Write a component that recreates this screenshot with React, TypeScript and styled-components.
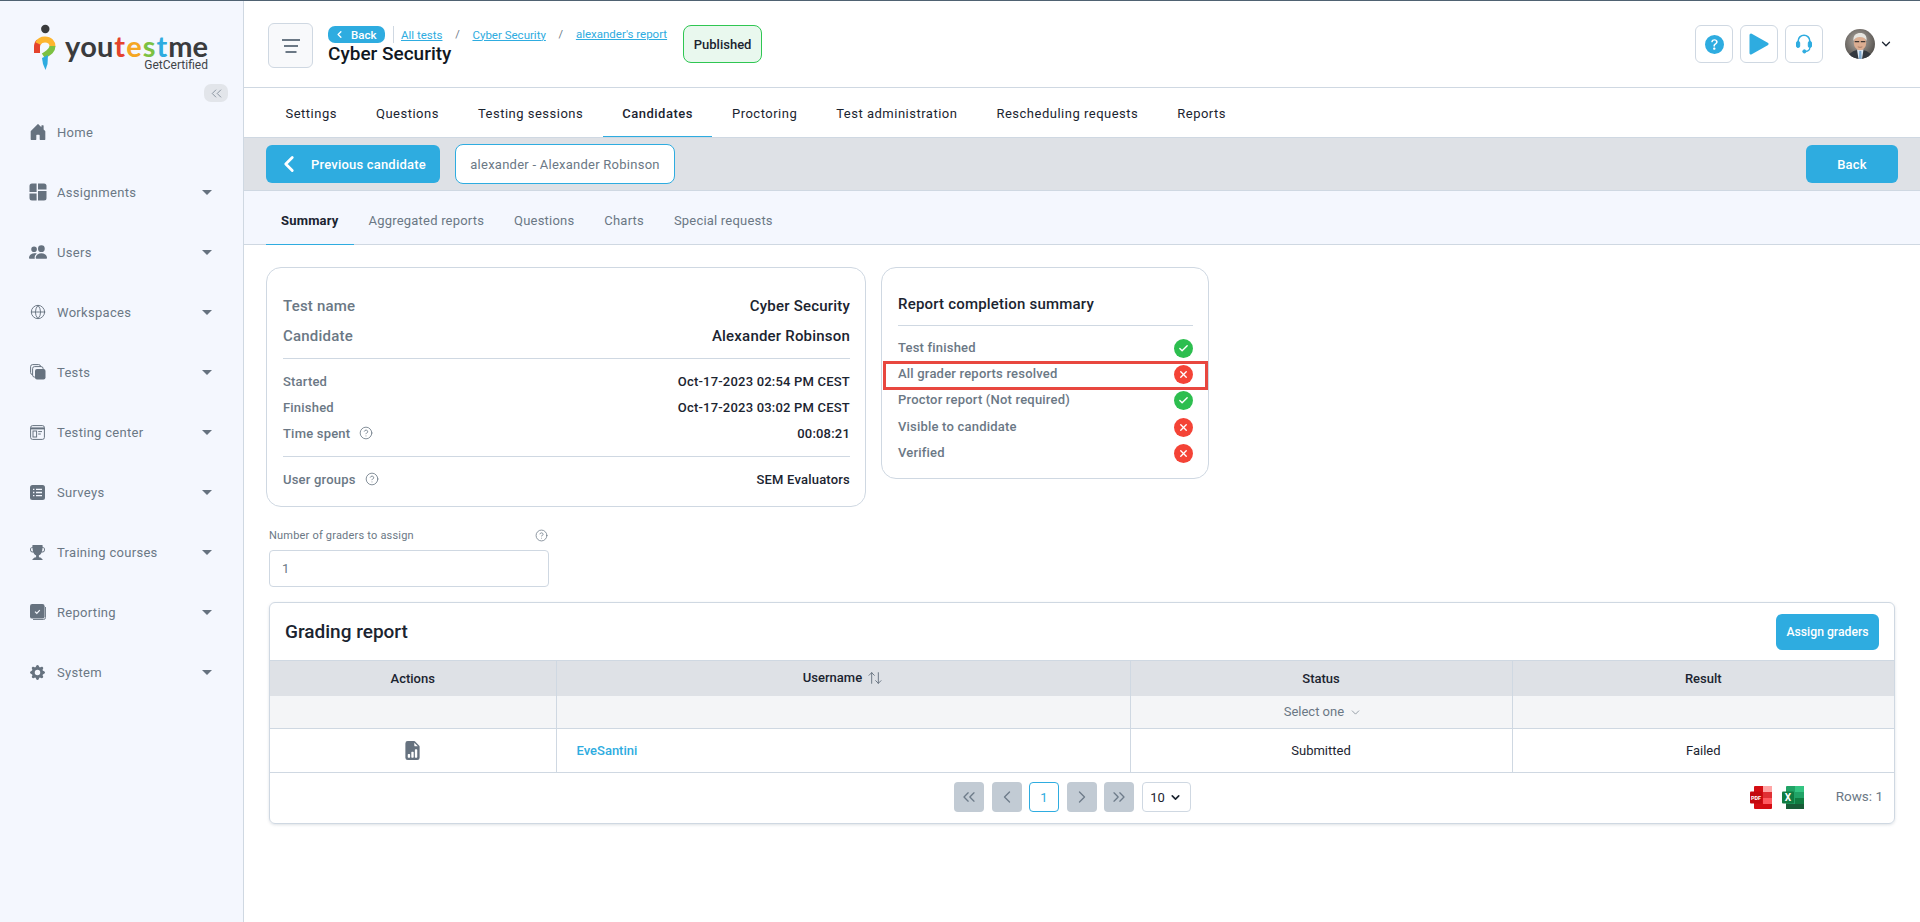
import React from 'react';
import styled, {createGlobalStyle} from 'styled-components';
import {
    ArrowUpDown,
    Check,
    ChevronDown,
    ChevronLeft,
    ChevronRight,
    ChevronsLeft,
    ChevronsRight,
    CircleHelp,
    Globe,
    X,
} from 'lucide-react';
import {
    BsFileEarmarkBarGraphFill,
    BsGearFill,
    BsHouseDoorFill,
    BsPeopleFill,
    BsQuestionCircleFill,
    BsTrophyFill,
} from 'react-icons/bs';

const blue = '#2eace0';
const line = '#cfd8e2';
const grayText = '#6b7885';
const darkText = '#1b2430';

const GlobalStyle = createGlobalStyle`
    html, body {
        margin: 0;
        height: 100%;
        background: #fff;
        overflow: hidden;
    }
    body, input {
        font-family: Roboto, "Liberation Sans", sans-serif;
    }
    * {
        box-sizing: border-box;
    }
`;

const Page = styled.div`
    display: flex;
    height: 922px;
    border-top: 1px solid #4f6272;
`;

/* sidebar */
const Sidebar = styled.aside`
    display: flex;
    flex-direction: column;
    flex: 0 0 244px;
    background: #f4f7fe;
    border-right: 1px solid ${line};
`;

const Brand = styled.div`
    display: flex;
    height: 75px;
    padding: 19px 0 0 28px;
`;

const BrandText = styled.div`
    display: flex;
    flex-direction: column;
    align-items: flex-end;
    margin: 13px 0 0 1px;
`;

const Wordmark = styled.div`
    display: flex;
    gap: 1px;
    font-family: Lato, sans-serif;
    font-weight: 700;
    font-size: 29px;
    line-height: 26px;
    font-kerning: none;
`;

const Letter = styled.span<{$color: string}>`
    display: block;
    height: 26px;
    color: ${p => p.$color};
`;

const Tagline = styled.div`
    font-size: 12px;
    line-height: 12px;
    color: #3f4448;
`;

const Collapse = styled.button`
    display: flex;
    align-items: center;
    justify-content: center;
    align-self: flex-end;
    width: 24px;
    height: 18px;
    margin: 8px 15px 0 0;
    padding: 0;
    border: 0;
    border-radius: 7px;
    background: #e2e5ea;
    color: #7b8794;
`;

const MenuItem = styled.div`
    display: flex;
    align-items: center;
    height: 60px;
    padding: 0 31px 0 24px;
    color: ${grayText};
    font-size: 13px;
    letter-spacing: 0.3px;
`;

const MenuIcon = styled.span`
    display: flex;
    align-items: center;
    justify-content: center;
    width: 27px;
    margin-right: 6px;
    color: #66727f;
`;

const Caret = styled.span`
    margin-left: auto;
    border-left: 5px solid transparent;
    border-right: 5px solid transparent;
    border-top: 5.5px solid #66727f;
`;

/* top of the main column */
const Main = styled.main`
    display: flex;
    flex-direction: column;
    flex: 1;
    min-width: 0;
`;

const Header = styled.header`
    display: flex;
    align-items: flex-start;
    height: 87px;
    padding: 22px 27px 0 24px;
    border-bottom: 1px solid ${line};
`;

const Hamburger = styled.button`
    display: flex;
    align-items: center;
    justify-content: center;
    width: 45px;
    height: 45px;
    padding: 0;
    background: #f8f9fb;
    border: 1px solid ${line};
    border-radius: 6px;
    color: #6b7885;
`;

const TitleBlock = styled.div`
    margin: 3px 0 0 15px;
`;

const Crumbs = styled.div`
    display: flex;
    align-items: center;
    height: 17px;
    font-size: 11.5px;
`;

const BackPill = styled.span`
    display: flex;
    align-items: center;
    gap: 6px;
    width: 57px;
    height: 17px;
    padding-left: 6px;
    border-radius: 7px;
    background: ${blue};
    color: #fff;
    font-weight: 500;
    font-size: 11.5px;
`;

const CrumbBar = styled.span`
    width: 1px;
    height: 17px;
    margin: 0 7px 0 8px;
    background: ${line};
`;

const Crumb = styled.a<{$raise?: boolean}>`
    color: ${blue};
    text-decoration: underline;
    transform: translateY(${p => (p.$raise ? '-1px' : '0')});
`;

const CrumbSlash = styled.span`
    width: 30px;
    text-align: center;
    color: #6b7885;
    font-size: 11px;
`;

const PageTitle = styled.div`
    font-size: 19px;
    font-weight: 500;
    line-height: 22px;
    color: #11181f;
`;

const Published = styled.span`
    display: flex;
    align-items: center;
    justify-content: center;
    width: 79px;
    height: 38px;
    margin: 2px 0 0 16px;
    background: #e9f8ee;
    border: 1px solid #2fc652;
    border-radius: 8px;
    color: ${darkText};
    font-size: 13px;
    font-weight: 500;
`;

const HeaderRight = styled.div`
    display: flex;
    align-items: center;
    margin: 2px 0 0 auto;
`;

const ToolButton = styled.button`
    display: flex;
    align-items: center;
    justify-content: center;
    width: 38px;
    height: 38px;
    margin-right: 7px;
    padding: 0;
    background: #fff;
    border: 1px solid ${line};
    border-radius: 6px;
    color: ${blue};
`;

const AvatarWrap = styled.span`
    display: flex;
    align-items: center;
    gap: 4px;
    margin-left: 15px;
    color: #1b2430;
`;

const TopTabs = styled.nav`
    display: flex;
    flex: 0 0 49px;
    padding-left: 22px;
`;

const TopTab = styled.a<{$active?: boolean}>`
    display: flex;
    align-items: center;
    padding: 3px 19.5px 0;
    font-size: 13px;
    letter-spacing: 0.5px;
    color: ${darkText};
    font-weight: ${p => (p.$active ? 500 : 400)};
    border-bottom: 1px solid ${p => (p.$active ? blue : 'transparent')};
`;

const CandidateBar = styled.div`
    display: flex;
    align-items: center;
    flex: 0 0 54px;
    padding: 0 22px;
    background: #dee1e6;
    border-top: 1px solid ${line};
    border-bottom: 1px solid ${line};
`;

const PrimaryButton = styled.button<{$width: number}>`
    display: flex;
    align-items: center;
    justify-content: center;
    width: ${p => p.$width}px;
    height: 38px;
    padding: 0;
    border: 0;
    border-radius: 6px;
    background: ${blue};
    color: #fff;
    font-family: inherit;
    font-size: 13px;
    font-weight: 500;
    letter-spacing: 0.2px;
`;

const PreviousButton = styled(PrimaryButton)`
    justify-content: flex-start;
    gap: 9px;
    padding-left: 10px;
`;

const NameBox = styled.div`
    display: flex;
    align-items: center;
    justify-content: center;
    width: 220px;
    height: 40px;
    margin-left: 15px;
    background: #fff;
    border: 1px solid ${blue};
    border-radius: 8px;
    color: ${grayText};
    font-size: 13px;
    letter-spacing: 0.25px;
`;

const BarEnd = styled.div`
    margin-left: auto;
`;

const SubTabs = styled.nav`
    display: flex;
    flex: 0 0 54px;
    padding-left: 22px;
    background: #f4f7fe;
    border-bottom: 1px solid ${line};
`;

const SubTab = styled.a<{$active?: boolean}>`
    display: flex;
    align-items: center;
    padding: 6px 15px 0;
    margin-bottom: -1px;
    font-size: 13px;
    letter-spacing: 0.2px;
    color: ${p => (p.$active ? darkText : grayText)};
    font-weight: ${p => (p.$active ? 700 : 400)};
    border-bottom: 1px solid ${p => (p.$active ? blue : 'transparent')};
`;

/* summary cards */
const Content = styled.div`
    display: flex;
    flex-direction: column;
    padding: 22px 25px 0 22px;
`;

const Cards = styled.div`
    display: flex;
    align-items: flex-start;
    gap: 15px;
`;

const InfoCard = styled.section`
    width: 600px;
    height: 240px;
    padding: 23px 15px 0 16px;
    border: 1px solid ${line};
    border-radius: 15px;
`;

const InfoRow = styled.div<{$big?: boolean}>`
    display: flex;
    align-items: center;
    justify-content: space-between;
    height: ${p => (p.$big ? 30 : 26)}px;
    font-size: ${p => (p.$big ? 15 : 13)}px;
    letter-spacing: 0.2px;
    font-weight: 500;
    color: ${darkText};
`;

const InfoLabel = styled.span`
    display: flex;
    align-items: center;
    gap: 9px;
    color: ${grayText};
`;

const Divider = styled.div<{$above: number; $below: number}>`
    height: 1px;
    margin: ${p => p.$above}px 0 ${p => p.$below}px;
    background: ${line};
`;

const StatusCard = styled.section`
    width: 328px;
    height: 212px;
    padding: 26px 15px 0 16px;
    border: 1px solid ${line};
    border-radius: 15px;
`;

const StatusTitle = styled.h3`
    margin: 0;
    font-size: 15px;
    font-weight: 500;
    line-height: 20px;
    letter-spacing: 0.2px;
    color: ${darkText};
`;

const StatusRow = styled.div`
    position: relative;
    display: flex;
    align-items: center;
    justify-content: space-between;
    height: 26.4px;
    color: ${grayText};
    font-size: 13px;
    font-weight: 500;
    letter-spacing: 0.2px;
`;

const StatusDot = styled.span<{$ok: boolean}>`
    display: flex;
    align-items: center;
    justify-content: center;
    width: 19px;
    height: 19px;
    margin-top: 2px;
    border-radius: 50%;
    background: ${p => (p.$ok ? '#2dbe4f' : '#f44336')};
    color: #fff;
`;

const Highlight = styled.span`
    position: absolute;
    top: 1px;
    bottom: -3px;
    left: -15px;
    right: -15px;
    border: 3px solid #e8473f;
`;

/* graders field */
const Field = styled.div`
    width: 280px;
    margin: 21px 0 0 3px;
`;

const FieldLabel = styled.label`
    display: flex;
    align-items: center;
    justify-content: space-between;
    height: 14px;
    margin-bottom: 8px;
    padding-right: 1px;
    font-size: 11px;
    letter-spacing: 0.2px;
    color: ${grayText};
`;

const FieldInput = styled.input`
    display: block;
    width: 100%;
    height: 37px;
    padding: 0 12px;
    border: 1px solid ${line};
    border-radius: 4px;
    font-size: 13px;
    color: ${grayText};
`;

/* grading table */
const GradingCard = styled.section`
    margin: 15px 0 0 3px;
    height: 222px;
    border: 1px solid ${line};
    border-radius: 6px;
    box-shadow: 0 1px 3px rgba(90, 110, 130, 0.2);
`;

const GradingHead = styled.div`
    display: flex;
    align-items: center;
    justify-content: space-between;
    height: 57px;
    padding: 0 15px;
`;

const GradingTitle = styled.h2`
    margin: 0;
    font-size: 19px;
    font-weight: 500;
    color: ${darkText};
`;

const AssignButton = styled(PrimaryButton)`
    height: 36px;
    font-size: 12.2px;
    letter-spacing: 0;
`;

const Table = styled.table`
    width: 100%;
    table-layout: fixed;
    border-collapse: collapse;
    font-size: 13px;
    color: ${darkText};
`;

const Th = styled.th`
    height: 35px;
    padding: 0;
    background: #dee1e6;
    border: 1px solid ${line};
    border-width: 1px 0 0 1px;
    font-weight: 500;
    &:first-child {
        border-left: 0;
    }
`;

const SortGlyph = styled.span`
    display: inline-flex;
    vertical-align: -4px;
    margin-left: 5px;
    color: #66727f;
`;

const FilterGlyph = styled(SortGlyph)`
    margin-left: 2px;
    vertical-align: -3px;
`;

const FilterCell = styled.td`
    height: 33px;
    padding: 0 0 0 4px;
    text-align: center;
    background: #f4f5f7;
    border-left: 1px solid ${line};
    border-bottom: 1px solid ${line};
    color: ${grayText};
    &:first-child {
        border-left: 0;
    }
`;

const Td = styled.td`
    height: 44px;
    padding: 0;
    text-align: center;
    border-left: 1px solid ${line};
    border-bottom: 1px solid ${line};
    &:first-child {
        border-left: 0;
    }
`;

const UserCell = styled(Td)`
    padding-left: 20px;
    text-align: left;
`;

const UserLink = styled.a`
    color: ${blue};
    font-weight: 500;
`;

const ActionIcon = styled.span`
    display: inline-flex;
    color: #66727f;
    vertical-align: middle;
`;

const Footer = styled.div`
    display: flex;
    align-items: center;
    height: 50px;
    padding: 0 11px 2px 684px;
`;

const Pager = styled.div`
    display: flex;
    align-items: center;
    gap: 7.5px;
`;

const PageButton = styled.button`
    display: flex;
    align-items: center;
    justify-content: center;
    width: 30px;
    height: 30px;
    padding: 0;
    border: 0;
    border-radius: 4px;
    background: #c2cbd4;
    color: #6e7c8a;
`;

const PageCurrent = styled(PageButton)`
    background: #fff;
    border: 1px solid ${blue};
    color: ${blue};
    font-family: inherit;
    font-size: 13px;
`;

const PageSize = styled.div`
    display: flex;
    align-items: center;
    justify-content: center;
    gap: 4px;
    width: 49px;
    height: 30px;
    border: 1px solid ${line};
    border-radius: 4px;
    font-size: 13px;
    color: ${darkText};
`;

const Exports = styled.div`
    display: flex;
    align-items: center;
    gap: 10px;
    margin-left: auto;
`;

const RowsCount = styled.span`
    margin: 0 0 3px 22px;
    font-size: 13.5px;
    color: ${grayText};
`;

/* drawings */
function LogoMark() {
    return (
        <svg width="36" height="56" viewBox="0 0 36 56">
            <circle cx="17.3" cy="9" r="4.2" fill="#3a3b3d"/>
            <path d="M9 33 V27 Q9 23.5 11 22" fill="none" stroke="#e4432d" strokeWidth="6"/>
            <path d="M10 23.5 Q12 19.5 17 19.5 C22 19.5 24.5 23 24.5 26.5" fill="none" stroke="#fdb52e" strokeWidth="6"/>
            <path d="M24.5 26 C24.5 31 20 33 15.5 36" fill="none" stroke="#7cc142" strokeWidth="6"/>
            <path d="M14 38 L20 35 L19.5 44 L17.5 50 L15 44 Z" fill="#2eace0"/>
        </svg>
    );
}

function BoardIcon() {
    return (
        <svg width="18" height="18" viewBox="0 0 18 18" fill="currentColor">
            <path d="M3 0.5h4.6v8.5H0.5V3A2.5 2.5 0 0 1 3 0.5Z"/>
            <path d="M9 0.5h6a2.5 2.5 0 0 1 2.5 2.5v3.6H9Z"/>
            <path d="M0.5 10.5h7.1v7H3A2.5 2.5 0 0 1 0.5 15Z"/>
            <path d="M9 8h8.5v7a2.5 2.5 0 0 1-2.5 2.5H9Z"/>
        </svg>
    );
}

function StackIcon() {
    return (
        <svg width="16" height="16" viewBox="0 0 16 16">
            <rect x="0.6" y="0.6" width="10" height="10" rx="2" fill="none" stroke="currentColor"/>
            <rect x="2.6" y="2.6" width="10.5" height="10.5" rx="2" fill="#f4f7fe" stroke="currentColor"/>
            <rect x="5" y="5" width="10.5" height="10.5" rx="2" fill="currentColor"/>
        </svg>
    );
}

function CenterIcon() {
    return (
        <svg width="15" height="15" viewBox="0 0 15 15" fill="none" stroke="currentColor">
            <rect x="0.6" y="0.6" width="13.8" height="13.8" rx="2"/>
            <path d="M0.6 3.4h13.8" strokeWidth="2"/>
            <rect x="3" y="6" width="3.6" height="6"/>
            <path d="M8.2 6.6h3.8M8.2 9h2.6"/>
        </svg>
    );
}

function SurveyIcon() {
    return (
        <svg width="15" height="15" viewBox="0 0 15 15">
            <rect width="15" height="15" rx="2.5" fill="currentColor"/>
            <path d="M3 4.3h1.4M6 4.3h6M3 7.5h1.4M6 7.5h6M3 10.7h1.4M6 10.7h6" stroke="#f4f7fe" strokeWidth="1.3"/>
        </svg>
    );
}

function ReportIcon() {
    return (
        <svg width="16" height="16" viewBox="0 0 16 16">
            <rect width="14.6" height="14.6" rx="2.2" fill="currentColor"/>
            <path d="M15.5 3v10.5a2 2 0 0 1-2 2H3" fill="none" stroke="currentColor" strokeWidth="0.9"/>
            <path d="M5 7.6l1.8 1.7 3-3.2" fill="none" stroke="#f4f7fe" strokeWidth="1.2"/>
        </svg>
    );
}

function MenuGlyph() {
    return (
        <svg width="20" height="16" viewBox="0 0 20 16" fill="none" stroke="currentColor" strokeWidth="1.8">
            <path d="M1 2h18M3 8h14M4.500 14h11"/>
        </svg>
    );
}

function PlayGlyph() {
    return (
        <svg width="20" height="22" viewBox="0 0 20 22">
            <path d="M2 2 L18 11 L2 20 Z" fill="currentColor" stroke="currentColor" strokeWidth="3" strokeLinejoin="round"/>
        </svg>
    );
}

function HeadsetGlyph() {
    return (
        <svg width="16" height="20" viewBox="0 0 16 20" fill="none" stroke="currentColor">
            <path d="M2.200 8V7a5.800 5.800 0 0 1 11.600 0v1" strokeWidth="1.600"/>
            <rect x="0.500" y="7.500" width="3.200" height="6" rx="1.400" fill="currentColor"/>
            <rect x="12.300" y="7.500" width="3.200" height="6" rx="1.400" fill="currentColor"/>
            <path d="M13.800 13.500c0 2.500-1.600 3.800-4.300 3.800" strokeWidth="1.300"/>
            <circle cx="8.400" cy="17.400" r="1.600" fill="currentColor"/>
        </svg>
    );
}

function Avatar() {
    return (
        <svg width="30" height="30" viewBox="0 0 30 30">
            <defs>
                <clipPath id="avatarClip">
                    <circle cx="15" cy="15" r="15"/>
                </clipPath>
                <radialGradient id="avatarBg" cx="0.45" cy="0.4" r="0.7">
                    <stop offset="0" stopColor="#b5afa8"/>
                    <stop offset="1" stopColor="#45423f"/>
                </radialGradient>
            </defs>
            <g clipPath="url(#avatarClip)">
                <rect width="30" height="30" fill="url(#avatarBg)"/>
                <path d="M3 30c0-6 5-8.500 12-9.500 7 1 12 3.500 12 9.500Z" fill="#33383f"/>
                <path d="M12 20.500h6.500l-1.500 9.500h-3.500Z" fill="#dfe8f1"/>
                <path d="M14.300 22h2l.400 8h-2.800Z" fill="#7fa9cf"/>
                <ellipse cx="15" cy="13.800" rx="6.200" ry="7.400" fill="#dcae92"/>
                <path d="M8.500 12c-.7-6 3-8 6.600-8 4.200 0 7.200 2.600 6.400 8-1-2.800-3-4-6.600-4-3.200 0-5.400 1.200-6.400 4Z" fill="#e6e4df"/>
                <path d="M9.700 12.600h4.500M15.800 12.600h4.500" stroke="#3f3632" strokeWidth="1.100"/>
                <path d="M12.800 17.800c1.500.7 3 .7 4.500 0" stroke="#9c6d58" strokeWidth="0.800" fill="none"/>
            </g>
        </svg>
    );
}

function PdfIcon() {
    return (
        <svg width="22" height="23" viewBox="0 0 22 23">
            <rect x="4" y="0" width="18" height="23" rx="1" fill="#d40d12"/>
            <rect x="13" y="0" width="9" height="6" fill="#ffa5a5"/>
            <rect x="13" y="6" width="9" height="6" fill="#e03034"/>
            <rect x="13" y="12" width="9" height="6" fill="#ff5a5f"/>
            <rect x="0" y="5.500" width="12" height="12" rx="1" fill="#c30a0f"/>
            <text x="6" y="13.800" textAnchor="middle" fontSize="5.500" fontWeight="700" fill="#fff">PDF</text>
        </svg>
    );
}

function XlsIcon() {
    return (
        <svg width="22" height="23" viewBox="0 0 22 23">
            <rect x="4" y="0" width="18" height="23" rx="1" fill="#21a366"/>
            <rect x="13" y="0" width="9" height="6" fill="#33c481"/>
            <rect x="13" y="12" width="9" height="6" fill="#107c41"/>
            <rect x="4" y="18" width="18" height="5" fill="#185c37"/>
            <rect x="0" y="5.500" width="12" height="12" rx="1" fill="#107c41"/>
            <text x="6" y="15.200" textAnchor="middle" fontSize="10" fontWeight="700" fill="#fff">X</text>
        </svg>
    );
}

const menu: {label: string; icon: React.ReactNode; caret?: boolean}[] = [
    {label: 'Home', icon: <BsHouseDoorFill size={18}/>},
    {label: 'Assignments', icon: <BoardIcon/>, caret: true},
    {label: 'Users', icon: <BsPeopleFill size={18}/>, caret: true},
    {label: 'Workspaces', icon: <Globe size={16} strokeWidth={1.4}/>, caret: true},
    {label: 'Tests', icon: <StackIcon/>, caret: true},
    {label: 'Testing center', icon: <CenterIcon/>, caret: true},
    {label: 'Surveys', icon: <SurveyIcon/>, caret: true},
    {label: 'Training courses', icon: <BsTrophyFill size={15}/>, caret: true},
    {label: 'Reporting', icon: <ReportIcon/>, caret: true},
    {label: 'System', icon: <BsGearFill size={15}/>, caret: true},
];

const wordmark = [
    {text: 'you', color: '#3a3b3d'},
    {text: 't', color: '#e4432d'},
    {text: 'e', color: '#f5a623'},
    {text: 's', color: '#7cc142'},
    {text: 't', color: '#2eace0'},
    {text: 'me', color: '#3a3b3d'},
];

const topTabs = ['Settings', 'Questions', 'Testing sessions', 'Candidates', 'Proctoring', 'Test administration', 'Rescheduling requests', 'Reports'];
const subTabs = ['Summary', 'Aggregated reports', 'Questions', 'Charts', 'Special requests'];

const statuses = [
    {label: 'Test finished', ok: true},
    {label: 'All grader reports resolved', ok: false, marked: true},
    {label: 'Proctor report (Not required)', ok: true},
    {label: 'Visible to candidate', ok: false},
    {label: 'Verified', ok: false},
];

export default function App() {
    return (
        <>
            <GlobalStyle/>
            <Page>
                <Sidebar>
                    <Brand>
                        <LogoMark/>
                        <BrandText>
                            <Wordmark>
                                {wordmark.map((part, i) => (
                                    <Letter key={i} $color={part.color}>{part.text}</Letter>
                                ))}
                            </Wordmark>
                            <Tagline>GetCertified</Tagline>
                        </BrandText>
                    </Brand>
                    <Collapse><ChevronsLeft size={17} strokeWidth={1.2}/></Collapse>
                    {menu.map(item => (
                        <MenuItem key={item.label}>
                            <MenuIcon>{item.icon}</MenuIcon>
                            {item.label}
                            {item.caret && <Caret/>}
                        </MenuItem>
                    ))}
                </Sidebar>
                <Main>
                    <Header>
                        <Hamburger><MenuGlyph/></Hamburger>
                        <TitleBlock>
                            <Crumbs>
                                <BackPill><ChevronLeft size={11} strokeWidth={3}/>Back</BackPill>
                                <CrumbBar/>
                                <Crumb>All tests</Crumb>
                                <CrumbSlash>/</CrumbSlash>
                                <Crumb>Cyber Security</Crumb>
                                <CrumbSlash>/</CrumbSlash>
                                <Crumb $raise>alexander's report</Crumb>
                            </Crumbs>
                            <PageTitle>Cyber Security</PageTitle>
                        </TitleBlock>
                        <Published>Published</Published>
                        <HeaderRight>
                            <ToolButton><BsQuestionCircleFill size={19}/></ToolButton>
                            <ToolButton><PlayGlyph/></ToolButton>
                            <ToolButton><HeadsetGlyph/></ToolButton>
                            <AvatarWrap>
                                <Avatar/>
                                <ChevronDown size={14} strokeWidth={2.2}/>
                            </AvatarWrap>
                        </HeaderRight>
                    </Header>
                    <TopTabs>
                        {topTabs.map(t => (
                            <TopTab key={t} $active={t === 'Candidates'}>{t}</TopTab>
                        ))}
                    </TopTabs>
                    <CandidateBar>
                        <PreviousButton $width={174}><ChevronLeft size={26} strokeWidth={2.6}/>Previous candidate</PreviousButton>
                        <NameBox>alexander - Alexander Robinson</NameBox>
                        <BarEnd><PrimaryButton $width={92}>Back</PrimaryButton></BarEnd>
                    </CandidateBar>
                    <SubTabs>
                        {subTabs.map(t => (
                            <SubTab key={t} $active={t === 'Summary'}>{t}</SubTab>
                        ))}
                    </SubTabs>
                    <Content>
                        <Cards>
                            <InfoCard>
                                <InfoRow $big><InfoLabel>Test name</InfoLabel>Cyber Security</InfoRow>
                                <InfoRow $big><InfoLabel>Candidate</InfoLabel>Alexander Robinson</InfoRow>
                                <Divider $above={7} $below={9}/>
                                <InfoRow><InfoLabel>Started</InfoLabel>Oct-17-2023 02:54 PM CEST</InfoRow>
                                <InfoRow><InfoLabel>Finished</InfoLabel>Oct-17-2023 03:02 PM CEST</InfoRow>
                                <InfoRow><InfoLabel>Time spent <CircleHelp size={14} strokeWidth={1.4}/></InfoLabel>00:08:21</InfoRow>
                                <Divider $above={10} $below={9}/>
                                <InfoRow><InfoLabel>User groups <CircleHelp size={14} strokeWidth={1.4}/></InfoLabel>SEM Evaluators</InfoRow>
                            </InfoCard>
                            <StatusCard>
                                <StatusTitle>Report completion summary</StatusTitle>
                                <Divider $above={11} $below={8}/>
                                {statuses.map(s => (
                                    <StatusRow key={s.label}>
                                        {s.label}
                                        <StatusDot $ok={s.ok}>
                                            {s.ok ? <Check size={11} strokeWidth={3}/> : <X size={11} strokeWidth={3}/>}
                                        </StatusDot>
                                        {s.marked && <Highlight/>}
                                    </StatusRow>
                                ))}
                            </StatusCard>
                        </Cards>
                        <Field>
                            <FieldLabel>Number of graders to assign <CircleHelp size={13} strokeWidth={1.4}/></FieldLabel>
                            <FieldInput defaultValue="1"/>
                        </Field>
                        <GradingCard>
                            <GradingHead>
                                <GradingTitle>Grading report</GradingTitle>
                                <AssignButton $width={103}>Assign graders</AssignButton>
                            </GradingHead>
                            <Table>
                                <colgroup>
                                    <col width="286"/>
                                    <col width="574"/>
                                    <col width="382"/>
                                    <col/>
                                </colgroup>
                                <thead>
                                    <tr>
                                        <Th>Actions</Th>
                                        <Th>Username<SortGlyph><ArrowUpDown size={16} strokeWidth={1.4}/></SortGlyph></Th>
                                        <Th>Status</Th>
                                        <Th>Result</Th>
                                    </tr>
                                    <tr>
                                        <FilterCell/>
                                        <FilterCell/>
                                        <FilterCell>Select one <FilterGlyph><ChevronDown size={13} strokeWidth={1.2}/></FilterGlyph></FilterCell>
                                        <FilterCell/>
                                    </tr>
                                </thead>
                                <tbody>
                                    <tr>
                                        <Td><ActionIcon><BsFileEarmarkBarGraphFill size={19}/></ActionIcon></Td>
                                        <UserCell><UserLink>EveSantini</UserLink></UserCell>
                                        <Td>Submitted</Td>
                                        <Td>Failed</Td>
                                    </tr>
                                </tbody>
                            </Table>
                            <Footer>
                                <Pager>
                                    <PageButton><ChevronsLeft size={20} strokeWidth={1.6}/></PageButton>
                                    <PageButton><ChevronLeft size={20} strokeWidth={1.6}/></PageButton>
                                    <PageCurrent>1</PageCurrent>
                                    <PageButton><ChevronRight size={20} strokeWidth={1.6}/></PageButton>
                                    <PageButton><ChevronsRight size={20} strokeWidth={1.6}/></PageButton>
                                    <PageSize>10<ChevronDown size={13} strokeWidth={3}/></PageSize>
                                </Pager>
                                <Exports>
                                    <PdfIcon/>
                                    <XlsIcon/>
                                    <RowsCount>Rows: 1</RowsCount>
                                </Exports>
                            </Footer>
                        </GradingCard>
                    </Content>
                </Main>
            </Page>
        </>
    );
}
